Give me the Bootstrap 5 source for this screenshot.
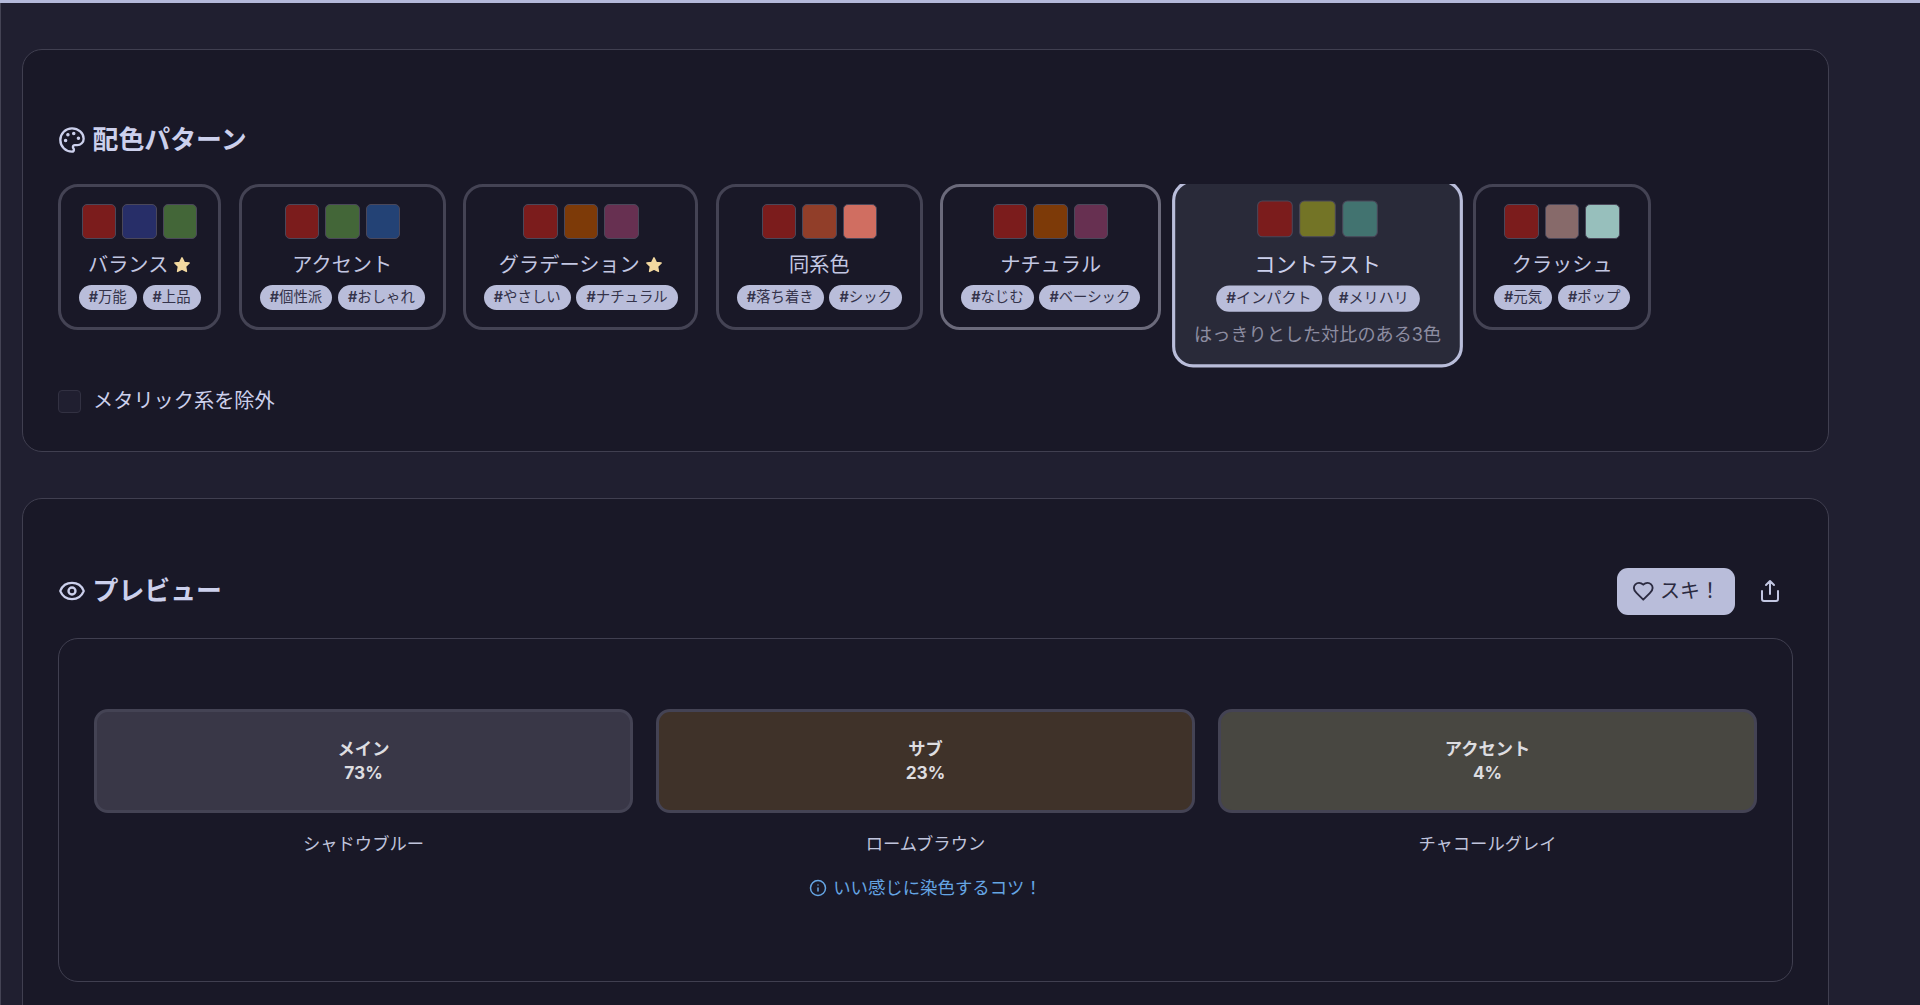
<!DOCTYPE html>
<html lang="ja" data-bs-theme="dark">
<head>
<meta charset="utf-8">
<title>配色パターン</title>
<meta name="viewport" content="width=device-width, initial-scale=1">
<link href="https://cdn.jsdelivr.net/npm/bootstrap@5.3.0/dist/css/bootstrap.min.css" rel="stylesheet">
<style>
  :root { --line:#403f50; --panel:#191827; --ink:#ccd0ec; --chip:#b9bdda; }
  html, body { height:100%; overflow:hidden; }
  body { background:#201f30; color:var(--ink); font-family:Inter,"Noto Sans CJK JP",sans-serif; border-top:3px solid #b4b9da; }
  .page-main { border-left:1px solid #444354; padding:46px 91px 0 21px; height:1002px; overflow:hidden; }
  .panel { background:var(--panel); border:1px solid var(--line); border-radius:20px; padding:0 35px; }
  .panel-patterns { height:402.500px; padding-top:72px; margin-bottom:46.500px; }
  .panel-preview { height:600px; padding-top:69px; }
  .panel-title { font-size:25.900px; font-weight:700; line-height:36px; gap:6.500px; margin:0; color:var(--ink); }
  svg { fill:none; stroke:currentColor; stroke-width:2; stroke-linecap:round; stroke-linejoin:round; flex:none; }
  .dot { fill:currentColor; stroke-width:1; }
  .pattern-row { gap:17.600px; margin-top:26px; height:187px; overflow:hidden; }
  .pattern { flex:none; border:3px solid #444354; border-radius:20px; height:145.500px; padding-top:17px; background:var(--panel); }
  .pattern.hovered { border-color:#6b6a7b; }
  .pattern.active { border-color:var(--chip); background:#292a39; height:179px; transform:scale(1.05); }
  .swatches { gap:6px; height:34.500px; }
  .swatch { width:34.500px; height:34.500px; border:1px solid #4a4759; border-radius:5px; }
  .pattern-name { font-size:20.200px; line-height:28px; margin-top:12px; gap:5px; color:#c3c7e2; }
  .active .pattern-name { color:var(--ink); }
  .star { fill:#f3d9a0; stroke:#f3d9a0; }
  .tags { gap:5.800px; margin-top:6.500px; }
  .chip { background:var(--chip); color:#34334a; border-radius:13px; height:25px; line-height:24px; font-size:14.400px; padding:0 10px; white-space:nowrap; }
  .chip b { font-weight:600; }
  .hint { font-size:17.300px; line-height:24px; margin-top:10px; color:#8d8da1; white-space:nowrap; }
  .metal-check { width:23px; height:23px; margin:0; background-color:#201f30; border:1px solid #323142; border-radius:5px; }
  .metal-label { font-size:20.200px; line-height:28px; }
  .metal { gap:12px; margin-top:16px; }
  .btn-like { background:var(--chip); color:#2b2a40; border:0; border-radius:11px; width:118.500px; height:46.500px; padding:0 0 0 15px; font-size:20px; gap:6px; }
  .btn-like:hover { background:var(--chip); color:#2b2a40; }
  .share { margin:0 11px 0 23px; color:#c3c7e2; }
  .preview-box { border:1px solid var(--line); border-radius:20px; height:344.500px; margin-top:23px; padding:70px 35px 0; }
  .mix { gap:23px; }
  .mix > div { flex:1 1 0; }
  .tile { height:104px; border:3px solid #444354; border-radius:14px; font-size:17.300px; font-weight:700; line-height:24px; color:#dddde0; }
  .tile-name { font-size:17.300px; line-height:26px; margin-top:18px; color:#c0c4dc; }
  .tip { font-size:17.400px; line-height:26px; margin-top:18px; gap:6px; color:#65a5e3; }
  .c-red{background:#7b1c1c}.c-navy{background:#272e68}.c-green{background:#436638}.c-blue{background:#234275}
  .c-brown{background:#7d3a08}.c-plum{background:#673051}.c-rust{background:#913e29}.c-coral{background:#d06e61}
  .c-olive{background:#737426}.c-teal{background:#427370}.c-mauve{background:#876a6a}.c-mint{background:#97bfbc}
  .t-main{background:#393747}.t-sub{background:#3f3229}.t-accent{background:#484741}
  .w1{width:163.300px}.w2{width:206.800px}.w3{width:235px}.w4{width:207px}.w5{width:220.500px}.w6{width:277.300px}.w7{width:177.500px}
</style>
<script src="https://cdn.jsdelivr.net/npm/bootstrap@5.3.0/dist/js/bootstrap.bundle.min.js"></script>
</head>
<body>
<main class="page-main">
  <section class="panel panel-patterns">
    <h2 class="panel-title d-flex align-items-center">
      <svg width="28" height="28" viewBox="0 0 24 24"><path d="M12 2C6.5 2 2 6.5 2 12s4.5 10 10 10c.926 0 1.648-.746 1.648-1.688 0-.437-.18-.835-.437-1.125-.29-.289-.438-.652-.438-1.125a1.64 1.64 0 0 1 1.668-1.668h1.996c3.051 0 5.555-2.503 5.555-5.554C21.965 6.012 17.461 2 12 2z"/><circle class="dot" cx="13.5" cy="6.5" r="1"/><circle class="dot" cx="17.5" cy="10.5" r="1"/><circle class="dot" cx="8.5" cy="7.5" r="1"/><circle class="dot" cx="6.5" cy="12.5" r="1"/></svg>
      <span>配色パターン</span>
    </h2>
    <div class="pattern-row d-flex align-items-start">
      <div class="pattern w1">
        <div class="swatches d-flex justify-content-center"><i class="swatch c-red"></i><i class="swatch c-navy"></i><i class="swatch c-green"></i></div>
        <div class="pattern-name d-flex justify-content-center align-items-center"><span>バランス</span><svg class="star" width="18" height="18" viewBox="0 0 24 24"><path d="M12 2.500l2.900 6 6.600.900-4.800 4.600 1.200 6.500-5.900-3.100-5.900 3.100L7.300 14 2.500 9.400l6.600-.900z"/></svg></div>
        <div class="tags d-flex justify-content-center"><span class="chip"><b>#</b>万能</span><span class="chip"><b>#</b>上品</span></div>
      </div>
      <div class="pattern w2">
        <div class="swatches d-flex justify-content-center"><i class="swatch c-red"></i><i class="swatch c-green"></i><i class="swatch c-blue"></i></div>
        <div class="pattern-name d-flex justify-content-center">アクセント</div>
        <div class="tags d-flex justify-content-center"><span class="chip"><b>#</b>個性派</span><span class="chip"><b>#</b>おしゃれ</span></div>
      </div>
      <div class="pattern w3">
        <div class="swatches d-flex justify-content-center"><i class="swatch c-red"></i><i class="swatch c-brown"></i><i class="swatch c-plum"></i></div>
        <div class="pattern-name d-flex justify-content-center align-items-center"><span>グラデーション</span><svg class="star" width="18" height="18" viewBox="0 0 24 24"><path d="M12 2.500l2.900 6 6.600.900-4.800 4.600 1.200 6.500-5.900-3.100-5.900 3.100L7.300 14 2.500 9.400l6.600-.900z"/></svg></div>
        <div class="tags d-flex justify-content-center"><span class="chip"><b>#</b>やさしい</span><span class="chip"><b>#</b>ナチュラル</span></div>
      </div>
      <div class="pattern w4">
        <div class="swatches d-flex justify-content-center"><i class="swatch c-red"></i><i class="swatch c-rust"></i><i class="swatch c-coral"></i></div>
        <div class="pattern-name d-flex justify-content-center">同系色</div>
        <div class="tags d-flex justify-content-center"><span class="chip"><b>#</b>落ち着き</span><span class="chip"><b>#</b>シック</span></div>
      </div>
      <div class="pattern hovered w5">
        <div class="swatches d-flex justify-content-center"><i class="swatch c-red"></i><i class="swatch c-brown"></i><i class="swatch c-plum"></i></div>
        <div class="pattern-name d-flex justify-content-center">ナチュラル</div>
        <div class="tags d-flex justify-content-center"><span class="chip"><b>#</b>なじむ</span><span class="chip"><b>#</b>ベーシック</span></div>
      </div>
      <div class="pattern active w6">
        <div class="swatches d-flex justify-content-center"><i class="swatch c-red"></i><i class="swatch c-olive"></i><i class="swatch c-teal"></i></div>
        <div class="pattern-name d-flex justify-content-center">コントラスト</div>
        <div class="tags d-flex justify-content-center"><span class="chip"><b>#</b>インパクト</span><span class="chip"><b>#</b>メリハリ</span></div>
        <div class="hint text-center">はっきりとした対比のある3色</div>
      </div>
      <div class="pattern w7">
        <div class="swatches d-flex justify-content-center"><i class="swatch c-red"></i><i class="swatch c-mauve"></i><i class="swatch c-mint"></i></div>
        <div class="pattern-name d-flex justify-content-center">クラッシュ</div>
        <div class="tags d-flex justify-content-center"><span class="chip"><b>#</b>元気</span><span class="chip"><b>#</b>ポップ</span></div>
      </div>
    </div>
    <div class="metal d-flex align-items-center">
      <input class="form-check-input metal-check" type="checkbox" id="metal">
      <label class="metal-label" for="metal">メタリック系を除外</label>
    </div>
  </section>

  <section class="panel panel-preview">
    <div class="d-flex align-items-center">
      <h2 class="panel-title d-flex align-items-center me-auto">
        <svg width="28" height="28" viewBox="0 0 24 24"><path d="M2.062 12.348a1 1 0 0 1 0-.696 10.750 10.750 0 0 1 19.876 0 1 1 0 0 1 0 .696 10.750 10.750 0 0 1-19.876 0"/><circle cx="12" cy="12" r="3"/></svg>
        <span>プレビュー</span>
      </h2>
      <button type="button" class="btn btn-like d-flex align-items-center">
        <svg width="22.500" height="22.500" viewBox="0 0 24 24"><path d="M19 14c1.490-1.460 3-3.210 3-5.500A5.500 5.500 0 0 0 16.500 3c-1.760 0-3 .5-4.500 2-1.500-1.500-2.740-2-4.500-2A5.500 5.500 0 0 0 2 8.500c0 2.300 1.500 4.050 3 5.500l7 7Z"/></svg>
        <span>スキ！</span>
      </button>
      <svg class="share" width="24" height="24" viewBox="0 0 24 24"><path d="M4 12v8a2 2 0 0 0 2 2h12a2 2 0 0 0 2-2v-8M16 6l-4-4-4 4M12 2v13"/></svg>
    </div>
    <div class="preview-box">
      <div class="mix d-flex text-center">
        <div>
          <div class="tile t-main d-flex flex-column justify-content-center"><span>メイン</span><span>73%</span></div>
          <div class="tile-name">シャドウブルー</div>
        </div>
        <div>
          <div class="tile t-sub d-flex flex-column justify-content-center"><span>サブ</span><span>23%</span></div>
          <div class="tile-name">ロームブラウン</div>
        </div>
        <div>
          <div class="tile t-accent d-flex flex-column justify-content-center"><span>アクセント</span><span>4%</span></div>
          <div class="tile-name">チャコールグレイ</div>
        </div>
      </div>
      <div class="tip d-flex justify-content-center align-items-center">
        <svg width="18" height="18" viewBox="0 0 24 24"><circle cx="12" cy="12" r="10"/><path d="M12 16v-4M12 8h.01"/></svg>
        <span>いい感じに染色するコツ！</span>
      </div>
    </div>
  </section>
</main>
</body>
</html>
